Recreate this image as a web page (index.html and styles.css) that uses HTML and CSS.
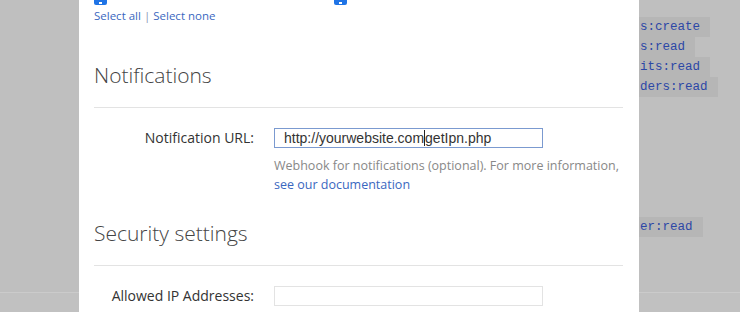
FILE: index.html
```html
<!DOCTYPE html>
<html>
<head>
<meta charset="utf-8">
<link rel="stylesheet" href="styles.css">
</head>
<body>
<div class="page">
  <div class="side side-left">
    <div class="side-body"></div>
    <div class="side-foot"></div>
  </div>
  <div class="modal">
    <div class="check-row">
      <span class="checkbox"><span class="tick"></span></span>
      <span class="checkbox"><span class="tick"></span></span>
    </div>
    <div class="select-links"><a class="link">Select all</a> <span class="sep">|</span> <a class="link">Select none</a></div>
    <h2 class="section-title">Notifications</h2>
    <div class="divider"></div>
    <div class="form-row">
      <label class="form-label">Notification URL:</label>
      <div class="form-field">
        <div class="input input-focus"><span>http://yourwebsite.com</span><span class="caret"></span><span>getIpn.php</span></div>
        <p class="help">Webhook for notifications (optional). For more information,<br><a class="link">see our documentation</a></p>
      </div>
    </div>
    <h2 class="section-title security">Security settings</h2>
    <div class="divider"></div>
    <div class="form-row">
      <label class="form-label">Allowed IP Addresses:</label>
      <div class="form-field">
        <div class="input"></div>
      </div>
    </div>
  </div>
  <div class="side side-right">
    <div class="side-body">
      <div class="scopes">
        <code class="scope">s:create</code>
        <code class="scope">s:read</code>
        <code class="scope">its:read</code>
        <code class="scope">ders:read</code>
      </div>
      <div class="scopes scopes-lower">
        <code class="scope">er:read</code>
      </div>
    </div>
    <div class="side-foot"></div>
  </div>
</div>
</body>
</html>
```

FILE: styles.css
```css
html, body {
  margin: 0;
  padding: 0;
  width: 740px;
  height: 312px;
  overflow: hidden;
  background: #bfbfbf;
}

.page {
  display: grid;
  grid-template-columns: 79px 560px 1fr;
  height: 312px;
  font-family: "Open Sans", "Noto Sans", sans-serif;
}

.side {
  display: flex;
  flex-direction: column;
  background: #bfbfbf;
  overflow: hidden;
}

.side-body {
  height: 292px;
}

.side-foot {
  flex: 1;
  border-top: 1px solid #cbcbcb;
  background: #c1c1c1;
}

.scopes {
  display: flex;
  flex-direction: column;
  align-items: flex-start;
  padding-top: 17px;
}

.scopes-lower {
  padding-top: 120px;
}

.scope {
  font-family: "Liberation Mono", "DejaVu Sans Mono", monospace;
  font-size: 12.5px;
  line-height: 20px;
  height: 20px;
  color: #2c47a6;
  background: #b6b6b6;
  padding: 0 10px 0 1px;
  white-space: nowrap;
}

.modal {
  background: #ffffff;
  padding: 0 16px 0 15px;
  overflow: hidden;
}

.check-row {
  height: 5px;
  overflow: hidden;
  display: flex;
  align-items: flex-end;
  gap: 227px;
}

.checkbox {
  width: 13px;
  height: 13px;
  flex: none;
  border-radius: 2px;
  background: #1f74e6;
  position: relative;
}

.tick {
  position: absolute;
  left: 5px;
  bottom: 1px;
  width: 3px;
  height: 2px;
  background: #ffffff;
}

.select-links {
  margin-top: 4px;
  font-size: 11.5px;
  line-height: 14px;
  color: #3a67c0;
}

.link {
  color: #3a67c0;
  text-decoration: none;
}

.sep {
  color: #8a96b5;
}

.section-title {
  margin: 38px 0 0 0;
  font-size: 21px;
  line-height: 28px;
  font-weight: 300;
  color: #444444;
}

.security {
  margin-top: 25px;
}

.divider {
  margin-top: 18px;
  height: 1px;
  background: #e3e3e3;
}

.form-row {
  display: grid;
  grid-template-columns: 160px 269px;
  column-gap: 20px;
  margin-top: 20px;
}

.form-label {
  text-align: right;
  font-size: 14px;
  line-height: 20px;
  color: #333333;
}

.input {
  box-sizing: border-box;
  height: 20px;
  border: 1px solid #e3e3e3;
  padding: 0 9px;
  font-family: "Liberation Sans", Arial, sans-serif;
  font-size: 14px;
  line-height: 18px;
  color: #333333;
  display: flex;
  align-items: center;
  white-space: nowrap;
}

.input-focus {
  border-color: #7b9ad0;
}

.caret {
  width: 1px;
  height: 16px;
  background: #222222;
}

.help {
  margin: 8px 0 0 0;
  font-size: 12.5px;
  line-height: 19px;
  color: #888888;
  white-space: nowrap;
}
```
